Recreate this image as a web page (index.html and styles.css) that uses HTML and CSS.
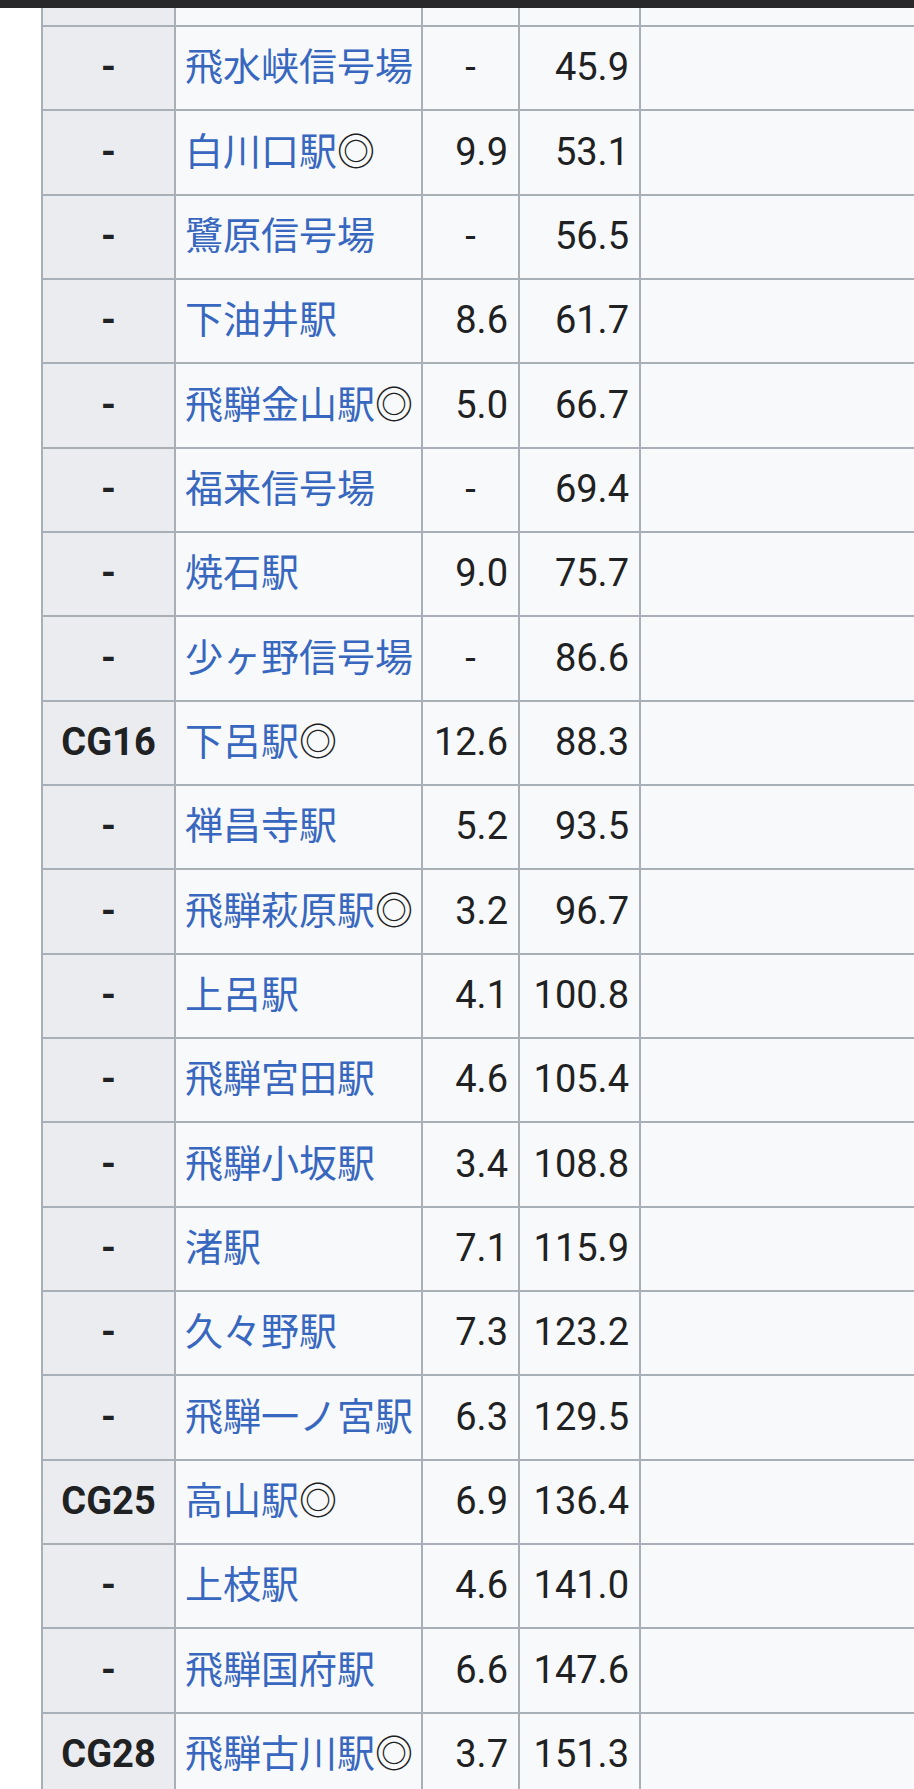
FILE: index.html
```html
<!DOCTYPE html>
<html lang="ja">
<head>
<meta charset="utf-8">
<title>高山本線 駅一覧</title>
<link rel="stylesheet" href="styles.css">
</head>
<body>
<div class="topbar"></div>
<div class="wrap">
<table class="stations">
<colgroup><col class="c-no"><col class="c-name"><col class="c-dist"><col class="c-total"><col class="c-rest"></colgroup>
<tbody>
<tr class="spacer"><th></th><td></td><td></td><td></td><td></td></tr>
<tr><th>-</th><td><a href="#">飛水峡信号場</a></td><td class="ctr">-</td><td class="num">45.9</td><td></td></tr>
<tr><th>-</th><td><a href="#">白川口駅</a>◎</td><td class="num">9.9</td><td class="num">53.1</td><td></td></tr>
<tr><th>-</th><td><a href="#">鷺原信号場</a></td><td class="ctr">-</td><td class="num">56.5</td><td></td></tr>
<tr><th>-</th><td><a href="#">下油井駅</a></td><td class="num">8.6</td><td class="num">61.7</td><td></td></tr>
<tr><th>-</th><td><a href="#">飛騨金山駅</a>◎</td><td class="num">5.0</td><td class="num">66.7</td><td></td></tr>
<tr><th>-</th><td><a href="#">福来信号場</a></td><td class="ctr">-</td><td class="num">69.4</td><td></td></tr>
<tr><th>-</th><td><a href="#">焼石駅</a></td><td class="num">9.0</td><td class="num">75.7</td><td></td></tr>
<tr><th>-</th><td><a href="#">少ヶ野信号場</a></td><td class="ctr">-</td><td class="num">86.6</td><td></td></tr>
<tr><th>CG16</th><td><a href="#">下呂駅</a>◎</td><td class="num">12.6</td><td class="num">88.3</td><td></td></tr>
<tr><th>-</th><td><a href="#">禅昌寺駅</a></td><td class="num">5.2</td><td class="num">93.5</td><td></td></tr>
<tr><th>-</th><td><a href="#">飛騨萩原駅</a>◎</td><td class="num">3.2</td><td class="num">96.7</td><td></td></tr>
<tr><th>-</th><td><a href="#">上呂駅</a></td><td class="num">4.1</td><td class="num">100.8</td><td></td></tr>
<tr><th>-</th><td><a href="#">飛騨宮田駅</a></td><td class="num">4.6</td><td class="num">105.4</td><td></td></tr>
<tr><th>-</th><td><a href="#">飛騨小坂駅</a></td><td class="num">3.4</td><td class="num">108.8</td><td></td></tr>
<tr><th>-</th><td><a href="#">渚駅</a></td><td class="num">7.1</td><td class="num">115.9</td><td></td></tr>
<tr><th>-</th><td><a href="#">久々野駅</a></td><td class="num">7.3</td><td class="num">123.2</td><td></td></tr>
<tr><th>-</th><td><a href="#">飛騨一ノ宮駅</a></td><td class="num">6.3</td><td class="num">129.5</td><td></td></tr>
<tr><th>CG25</th><td><a href="#">高山駅</a>◎</td><td class="num">6.9</td><td class="num">136.4</td><td></td></tr>
<tr><th>-</th><td><a href="#">上枝駅</a></td><td class="num">4.6</td><td class="num">141.0</td><td></td></tr>
<tr><th>-</th><td><a href="#">飛騨国府駅</a></td><td class="num">6.6</td><td class="num">147.6</td><td></td></tr>
<tr><th>CG28</th><td><a href="#">飛騨古川駅</a>◎</td><td class="num">3.7</td><td class="num">151.3</td><td></td></tr>
</tbody>
</table>
</div>
</body>
</html>
```
FILE: styles.css
```css
html, body {
  margin: 0;
  background: #ffffff;
}
body {
  font-family: Roboto, "Noto Sans CJK JP", sans-serif;
  color: #202122;
  overflow: hidden;
}
.topbar {
  height: 8px;
  background: #28282b;
}
.wrap {
  overflow: hidden;
  padding-left: 41px;
}
.stations {
  border-collapse: collapse;
  table-layout: fixed;
  width: 1000px;
  font-size: 38px;
  line-height: 1.2;
}
.c-no { width: 133px; }
.c-name { width: 247px; }
.c-dist { width: 97px; }
.c-total { width: 121px; }
.c-rest { width: 402px; }
.stations th,
.stations td {
  border: 2px solid #a9afb7;
  background: #f8f9fa;
  height: 82.33px;
  padding: 0 9px;
  vertical-align: middle;
  text-align: left;
  white-space: nowrap;
  overflow: hidden;
}
.stations th {
  background: #eaecf0;
  font-weight: 700;
  text-align: center;
}
.stations .spacer th,
.stations .spacer td {
  height: 17px;
  border-top: 0;
}
.stations a {
  color: #3767bf;
  text-decoration: none;
}
.stations .num {
  text-align: right;
  padding-right: 10px;
}
.stations .ctr {
  text-align: center;
}
```
